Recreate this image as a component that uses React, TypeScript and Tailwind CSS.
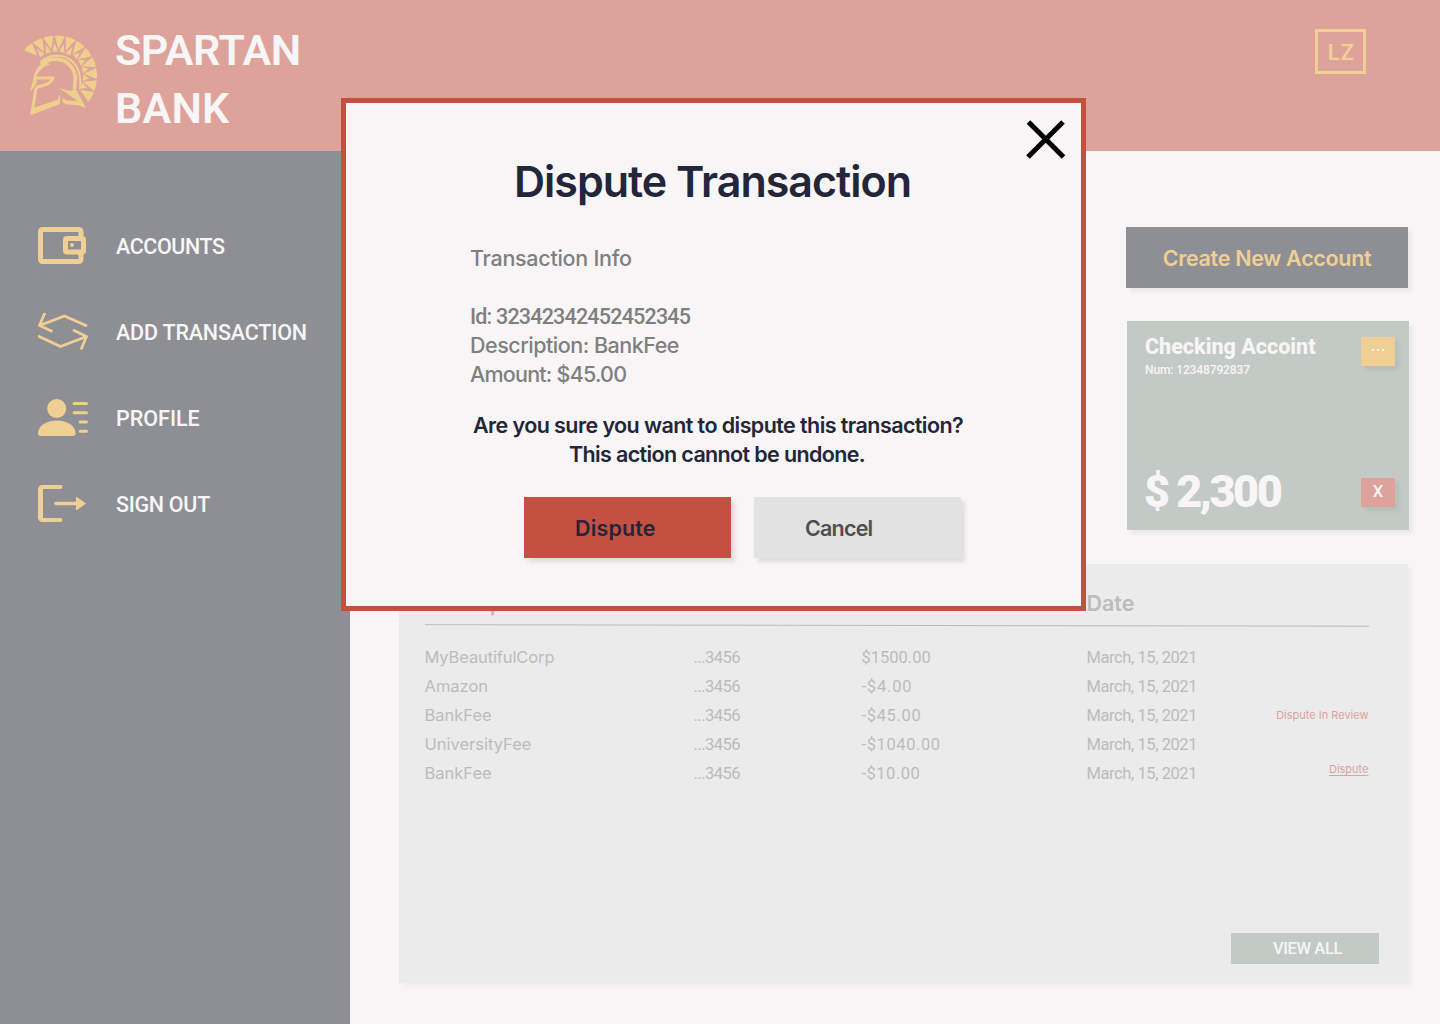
import type { ReactNode } from 'react'

const point = (angle: number, radius: number) => {
  const a = (angle * Math.PI) / 180
  return `${(140 + radius * Math.cos(a)).toFixed(1)} ${(162 + radius * Math.sin(a)).toFixed(1)}`
}

const SEGMENTS = 11
const START = -145
const SPAN = 187 / SEGMENTS
const rim = (angle: number) => 115 + (angle < -95 ? 0.0026 : 0.0006) * (angle + 95) ** 2

const plume = Array.from({ length: SEGMENTS }, (_, i) => {
  const from = START + i * SPAN
  const mid = from + SPAN / 2
  const to = from + SPAN
  return `M${point(from + 0.8, rim(from))} L${point(mid, rim(mid) + 1)} L${point(to - 0.8, rim(to))} L${point(mid, rim(mid) - 40)}Z`
}).join(' ')

const innerPlume = Array.from({ length: SEGMENTS - 1 }, (_, i) => {
  const at = START + (i + 1) * SPAN
  const r = rim(at)
  const base = at > -60 ? 41 : 47
  return `M${point(at - 7, r - base)} L${point(at, r - 22)} L${point(at + 7, r - base)}Z`
}).join(' ')

function SpartanLogo() {
  return (
    <svg className="size-[110px]" viewBox="0 0 330 330" fill="none" stroke="#efcf8e">
      <path d={plume} fill="#efcf8e" stroke="none" />
      <path d={innerPlume} fill="#efcf8e" stroke="none" />
      <path d="M91 127C112 105 153 100 179 118C206 136 214 167 210 207" strokeWidth="6" />
      <path d="M94 133C120 110 158 114 177 133C197 151 199 174 193 208" strokeWidth="11" />
      <path d="M102 126C76 142 72 163 67 190L60 215L73 201L80 187L78 170C88 151 103 137 120 133Z" fill="#efcf8e" stroke="none" />
      <path d="M76 174H129C124 188 113 194 83 200L77 209L67 275L144 246" strokeWidth="9" />
      <path d="M61 286L65 266L142 239L150 222V252Z" fill="#efcf8e" stroke="none" />
      <path d="M158 233L168 241L204 244L148 204L180 213L197 207L228 264L204 256L168 253L158 246Z" fill="#efcf8e" stroke="none" />
    </svg>
  )
}

function WalletIcon() {
  return (
    <svg className="h-[38px] w-[50px]" viewBox="0 0 50 38" fill="none" stroke="#efcf94" strokeWidth="5">
      <path d="M43 12V4.5a2 2 0 0 0-2-2H4.5a2 2 0 0 0-2 2v28a2 2 0 0 0 2 2H41a2 2 0 0 0 2-2V25" />
      <rect x="27.5" y="11.5" width="18" height="13.500" rx="1.500" />
      <circle cx="34" cy="18" r="2" fill="#efcf94" stroke="none" />
    </svg>
  )
}

function TransferIcon() {
  return (
    <svg className="h-[38px] w-[50px]" viewBox="0 0 50 38" fill="none" stroke="#efcf94" strokeWidth="2.700">
      <path d="M7 -0.500L1.500 12.500L14.500 18.500M1.500 12.500L26.500 3L49 13M43 36.500L48.500 23.500L35 17M48.500 23.500L22.500 33.500L0 23" />
    </svg>
  )
}

function ProfileIcon() {
  return (
    <svg className="h-[38px] w-[50px]" viewBox="0 0 50 38" fill="#efcf94">
      <circle cx="18.700" cy="9.500" r="9.500" />
      <path d="M2.500 37C.9 37 0 36 0 34.500C0 27 8 21.500 18.800 21.500S37.600 27 37.600 34.500C37.600 36 36.700 37 35.100 37Z" />
      <path d="M36 4.500H48.500M36 13.800H48.500M42.200 23H48.500M42.200 32.300H48.500" stroke="#efcf94" strokeWidth="3" strokeLinecap="round" />
    </svg>
  )
}

function SignOutIcon() {
  return (
    <svg className="h-[38px] w-[50px]" viewBox="0 0 50 38" fill="none" stroke="#efcf94" strokeLinecap="round">
      <path d="M2.500 3V34" strokeWidth="5" strokeLinecap="butt" />
      <path d="M22.500 2H4.500A2.500 2.500 0 0 0 2 4.500V32.500A2.500 2.500 0 0 0 4.500 35H22.500" strokeWidth="4" />
      <path d="M18 18.500H40" strokeWidth="3.600" />
      <path d="M38.700 12.800L47 18.500L38.700 24.400Z" fill="#efcf94" strokeWidth="1.500" strokeLinejoin="round" />
    </svg>
  )
}

function NavItem({ icon, children }: { icon: ReactNode; children: ReactNode }) {
  return (
    <a className="flex h-[86px] items-center gap-7">
      {icon}
      <span className="pt-0.5">{children}</span>
    </a>
  )
}

const transactions = [
  { name: 'MyBeautifulCorp', amount: '$1500.00', amountClass: '', nameClass: 'tracking-[-0.12px]' },
  { name: 'Amazon', amount: '-$4.00', amountClass: 'tracking-[0.8px]', nameClass: '' },
  { name: 'BankFee', amount: '-$45.00', amountClass: 'tracking-[0.65px]', nameClass: '', status: 'review' },
  { name: 'UniversityFee', amount: '-$1040.00', amountClass: 'tracking-[0.6px]', nameClass: '' },
  { name: 'BankFee', amount: '-$10.00', amountClass: 'tracking-[0.5px]', nameClass: '', status: 'open' },
]

function TransactionsPanel() {
  return (
    <section className="mt-[34px] ml-[49px] flex h-[419px] w-[1009px] flex-col bg-[#ebebeb] pr-[29px] pl-[25.5px] text-[#bcbcbc] shadow-[4px_4px_4px_rgba(0,0,0,0.035)]">
      <div className="mt-[25px] grid h-[29px] grid-cols-[269px_168px_225px_1fr] font-['Inter',sans-serif] text-[21.5px] leading-[29px] font-semibold">
        <span className="tracking-[-0.3px]">Description</span>
        <span className="tracking-[-0.3px]">Account</span>
        <span className="tracking-[-0.3px]">Amount</span>
        <span>Date</span>
      </div>
      <svg className="mt-1.5 h-[3px] w-[944px]" viewBox="0 0 944 3">
        <path d="M0 0.700L944 2.200" stroke="#bcbcbc" strokeWidth="1" />
      </svg>
      <div className="mt-4 flex flex-col text-[16.5px] leading-[29px]">
        {transactions.map((t, i) => (
          <div key={i} className="grid h-[29px] w-[944px] grid-cols-[269px_168px_225px_1fr]">
            <span className="font-['Inter',sans-serif]">
              <span className={t.nameClass}>{t.name}</span>
            </span>
            <span className="tracking-[-0.53px]">...3456</span>
            <span className={t.amountClass}>{t.amount}</span>
            <span className="flex justify-between">
              <span className="tracking-[-0.42px]">March, 15, 2021</span>
              {t.status === 'review' && <span className="font-['Inter',sans-serif] text-[11px] text-[#dda39b]">Dispute In Review</span>}
              {t.status === 'open' && (
                <a className="-mt-1 font-['Inter',sans-serif] text-[11px] text-[#dda39b] underline underline-offset-2">Dispute</a>
              )}
            </span>
          </div>
        ))}
      </div>
      <button className="mt-auto mb-[19px] h-[31px] w-[148px] self-end bg-[#c3cac5] pt-0.5 pl-[5px] text-[16.5px] font-medium tracking-[-0.4px] text-[#f7f5f6]">
        VIEW ALL
      </button>
    </section>
  )
}

function AccountCard() {
  return (
    <section className="mt-[33px] mr-[31px] flex h-[209px] w-[282px] justify-between self-end bg-[#c3cac5] pr-3.5 pl-[18px] text-[#f7f5f6] shadow-[4px_4px_4px_rgba(0,0,0,0.05)]">
      <div className="flex flex-col">
        <h2 className="mt-[11px] text-[21.5px] leading-[29px] font-extrabold">Checking Accoint</h2>
        <p className="mt-px text-xs leading-4 font-medium tracking-[-0.12px]">Num: 12348792837</p>
        <p className="mt-[85px] -ml-px text-[45px] leading-[58px] font-black tracking-[-2.5px]">$ 2,300</p>
      </div>
      <div className="flex flex-col justify-between pt-4 pb-[23px]">
        <button className="flex h-[29px] w-[34px] justify-center gap-[3px] bg-[#efcf94] pt-3 shadow-[4px_4px_4px_rgba(0,0,0,0.06)]">
          <i className="size-[2px] bg-[#f7f5f6]" />
          <i className="size-[2px] bg-[#f7f5f6]" />
          <i className="size-[2px] bg-[#f7f5f6]" />
        </button>
        <button className="h-[29px] w-[34px] bg-[#dda39b] pb-0.5 text-[16.5px] leading-[25px] font-medium shadow-[4px_4px_4px_rgba(0,0,0,0.06)]">X</button>
      </div>
    </section>
  )
}

function DisputeDialog() {
  return (
    <div
      role="dialog"
      className="absolute top-[98px] left-[341px] flex h-[513px] w-[745px] flex-col border-[5px] border-[#c45041] bg-[#f7f5f6] font-['Inter',sans-serif] text-[21.5px] leading-[29px] font-medium"
    >
      <button className="mt-[17px] mr-[15px] h-10 w-10 self-end" aria-label="Close">
        <svg className="size-10" viewBox="0 0 40 40" fill="none" stroke="#000" strokeWidth="5">
          <path d="M2.500 2L37.500 37M37 2L2 37" />
        </svg>
      </button>
      <h1 className="-mt-2 pl-[168px] text-[43px] leading-[58px] font-semibold tracking-[-1px] text-[#232539]">Dispute Transaction</h1>
      <div className="mt-[34px] flex flex-col pl-[124px] text-[#7f7f7f]">
        <p className="mb-[29px] tracking-[-0.28px]">Transaction Info</p>
        <p className="font-['Roboto',sans-serif] tracking-[-0.8px]">Id: 32342342452452345</p>
        <p className="tracking-[-0.49px]">Description: BankFee</p>
        <p className="tracking-[-0.78px]">Amount: $45.00</p>
      </div>
      <div className="mt-[22px] flex flex-col font-semibold text-[#232539]">
        <p className="pl-[127px] tracking-[-0.58px]">Are you sure you want to dispute this transaction?</p>
        <p className="pl-[223px] tracking-[-0.64px]">This action cannot be undone.</p>
      </div>
      <div className="mt-7 flex gap-[23px] pl-[178px] font-semibold">
        <button className="h-[61px] w-[207px] bg-[#c45041] pt-0.5 pl-[51px] text-left tracking-[0.15px] text-[#232539] shadow-[4px_4px_4px_rgba(0,0,0,0.1)]">
          Dispute
        </button>
        <button className="h-[61px] w-[207px] bg-[#e2e2e2] pt-0.5 pl-[51px] text-left tracking-[-0.8px] text-[#4f4f4f] shadow-[4px_4px_4px_rgba(0,0,0,0.1)]">
          Cancel
        </button>
      </div>
    </div>
  )
}

export default function App() {
  return (
    <div className="relative flex h-[1024px] w-[1440px] flex-col overflow-hidden bg-[#f7f5f6] font-['Roboto',sans-serif]">
      <header className="flex h-[151px] items-start justify-between bg-[#dda39b] pr-[74px] pl-[10px]">
        <div className="flex">
          <div className="pt-5">
            <SpartanLogo />
          </div>
          <div className="ml-[-5px] pt-[21px] text-[43px] leading-[58px] font-semibold text-[#f7f5f6]">
            <p className="tracking-[-0.4px]">SPARTAN</p>
            <p className="tracking-[0.2px]">BANK</p>
          </div>
        </div>
        <div className="mt-[29px] flex h-[45px] w-[51px] items-center justify-center border-[3px] border-[#efcf94] pt-[3px] pl-0.5 text-[21.5px] font-semibold tracking-[1.5px] text-[#efcf94]">
          LZ
        </div>
      </header>
      <div className="flex flex-1">
        <nav className="flex w-[350px] flex-col bg-[#8e8f94] pt-[52px] pl-[38px] text-[21.5px] font-medium text-[#f7f5f6]">
          <NavItem icon={<WalletIcon />}>
            <span className="tracking-[-0.42px]">ACCOUNTS</span>
          </NavItem>
          <NavItem icon={<TransferIcon />}>
            <span className="tracking-[-0.17px]">ADD TRANSACTION</span>
          </NavItem>
          <NavItem icon={<ProfileIcon />}>
            <span>PROFILE</span>
          </NavItem>
          <NavItem icon={<SignOutIcon />}>
            <span className="tracking-[-0.3px]">SIGN OUT</span>
          </NavItem>
        </nav>
        <main className="flex flex-1 flex-col">
          <button className="mt-[76px] mr-8 h-[61px] w-[282px] self-end bg-[#8e8f94] pt-px font-['Inter',sans-serif] text-[21.5px] font-semibold tracking-[-0.31px] text-[#efcf94] shadow-[4px_4px_4px_rgba(0,0,0,0.05)]">
            Create New Account
          </button>
          <AccountCard />
          <TransactionsPanel />
        </main>
      </div>
      <DisputeDialog />
    </div>
  )
}
